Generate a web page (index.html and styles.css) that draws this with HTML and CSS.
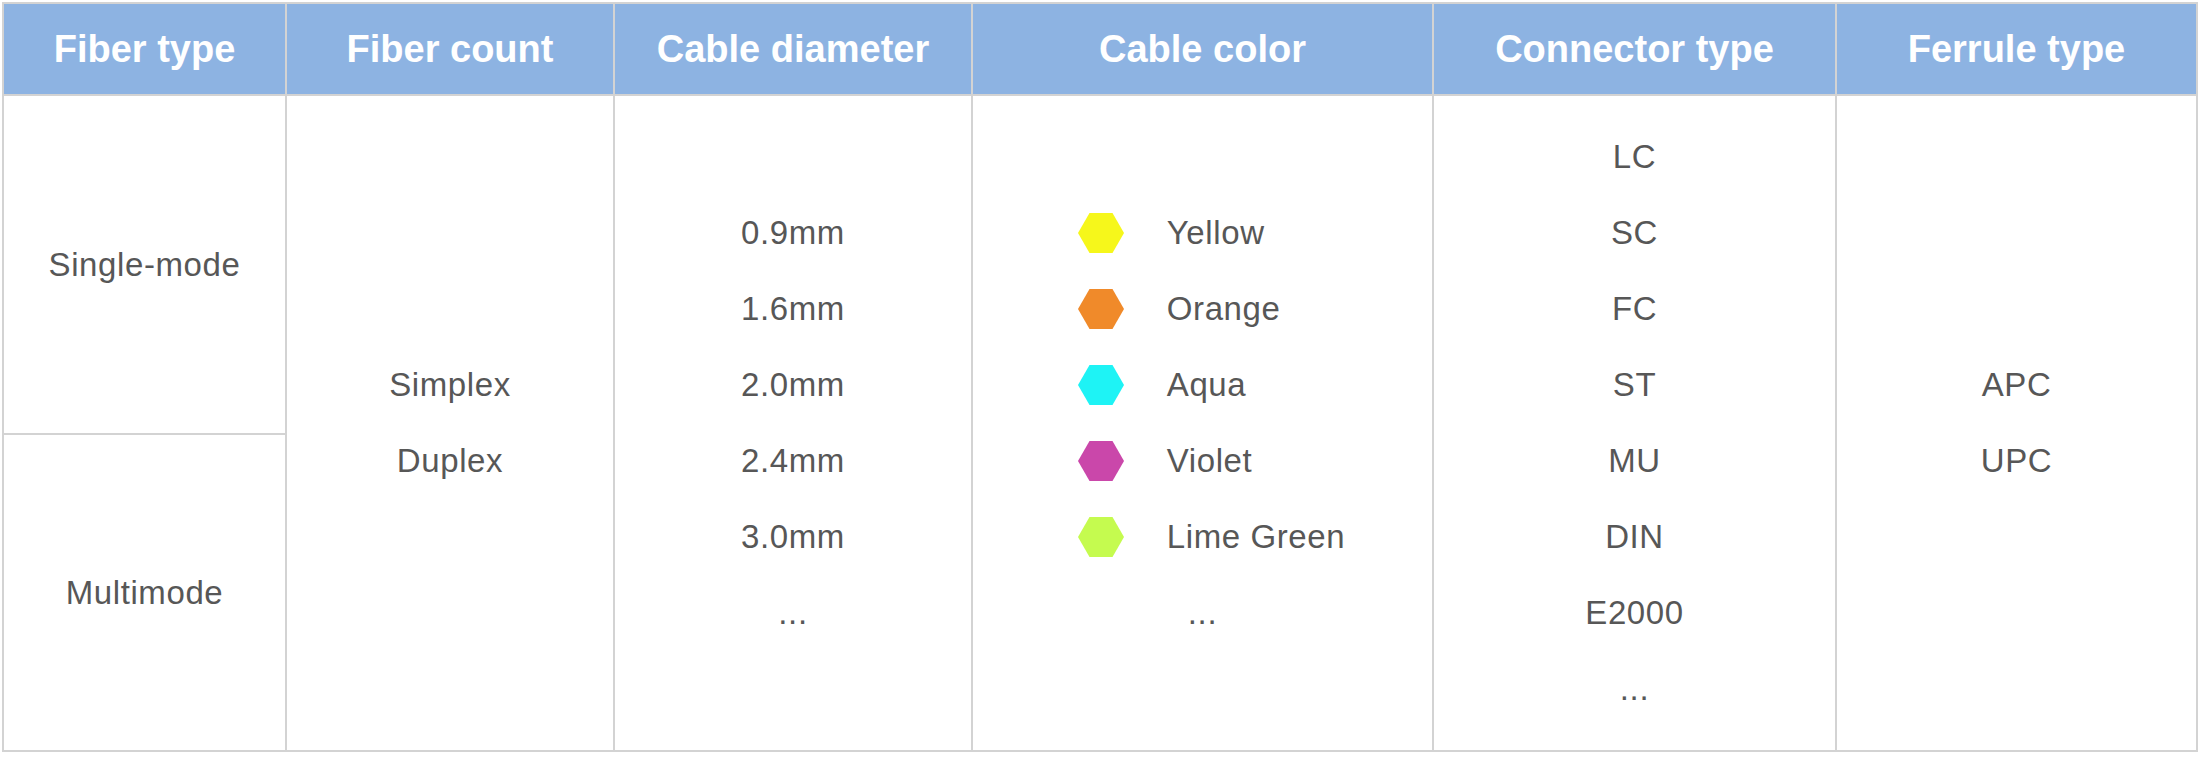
FILE: index.html
```html
<!DOCTYPE html>
<html lang="en">
<head>
<meta charset="utf-8">
<title>Fiber patch cable options</title>
<link rel="stylesheet" href="styles.css">
</head>
<body>
<div class="spec-grid">
  <div class="hd c1">Fiber type</div>
  <div class="hd c2">Fiber count</div>
  <div class="hd c3">Cable diameter</div>
  <div class="hd c4">Cable color</div>
  <div class="hd c5">Connector type</div>
  <div class="hd c6">Ferrule type</div>

  <div class="cell single"><div class="ln">Single-mode</div></div>
  <div class="cell multi"><div class="ln">Multimode</div></div>

  <div class="cell span c2">
    <div class="ln">Simplex</div>
    <div class="ln">Duplex</div>
  </div>

  <div class="cell span c3">
    <div class="ln">0.9mm</div>
    <div class="ln">1.6mm</div>
    <div class="ln">2.0mm</div>
    <div class="ln">2.4mm</div>
    <div class="ln">3.0mm</div>
    <div class="ln">...</div>
  </div>

  <div class="cell span c4">
    <div class="colors">
      <div class="ln color"><svg class="hex" viewBox="0 0 46 40"><polygon points="11.5,0 34.5,0 46,20 34.5,40 11.5,40 0,20" fill="#f6f71b"/></svg><span>Yellow</span></div>
      <div class="ln color"><svg class="hex" viewBox="0 0 46 40"><polygon points="11.5,0 34.5,0 46,20 34.5,40 11.5,40 0,20" fill="#f08a2a"/></svg><span>Orange</span></div>
      <div class="ln color"><svg class="hex" viewBox="0 0 46 40"><polygon points="11.5,0 34.5,0 46,20 34.5,40 11.5,40 0,20" fill="#1ef3f5"/></svg><span>Aqua</span></div>
      <div class="ln color"><svg class="hex" viewBox="0 0 46 40"><polygon points="11.5,0 34.5,0 46,20 34.5,40 11.5,40 0,20" fill="#ca47aa"/></svg><span>Violet</span></div>
      <div class="ln color"><svg class="hex" viewBox="0 0 46 40"><polygon points="11.5,0 34.5,0 46,20 34.5,40 11.5,40 0,20" fill="#c5fb4f"/></svg><span>Lime Green</span></div>
    </div>
    <div class="ln">...</div>
  </div>

  <div class="cell span c5">
    <div class="ln">LC</div>
    <div class="ln">SC</div>
    <div class="ln">FC</div>
    <div class="ln">ST</div>
    <div class="ln">MU</div>
    <div class="ln">DIN</div>
    <div class="ln">E2000</div>
    <div class="ln">...</div>
  </div>

  <div class="cell span c6">
    <div class="ln">APC</div>
    <div class="ln">UPC</div>
  </div>
</div>
</body>
</html>
```

FILE: styles.css
```css
html, body {
  margin: 0;
  padding: 0;
  background: #ffffff;
}

body {
  padding: 2px;
  font-family: "Liberation Sans", Arial, sans-serif;
}

.spec-grid {
  display: grid;
  width: 2196px;
  box-sizing: border-box;
  grid-template-columns: 281px 326px 356px 459px 401px 359px;
  grid-template-rows: 90px 337px 315px;
  gap: 2px;
  padding: 2px;
  background: #d3d3d3;
}

.hd {
  background: #8db3e2;
  color: #ffffff;
  font-weight: bold;
  font-size: 38px;
  display: flex;
  align-items: center;
  justify-content: center;
}

.cell {
  background: #ffffff;
  color: #575757;
  font-size: 33px;
  letter-spacing: 0.6px;
  display: flex;
  flex-direction: column;
  align-items: center;
  justify-content: center;
}

.single {
  grid-column: 1;
  grid-row: 2;
}

.multi {
  grid-column: 1;
  grid-row: 3;
}

.span {
  grid-row: 2 / 4;
}

.c2 { grid-column: 2; }
.c3 { grid-column: 3; }
.c4 { grid-column: 4; }
.c5 { grid-column: 5; }
.c6 { grid-column: 6; }

.hd.c1 { grid-column: 1; }
.hd { grid-row: 1; }

.ln {
  height: 76px;
  line-height: 76px;
  white-space: nowrap;
}

.colors {
  display: flex;
  flex-direction: column;
  align-items: flex-start;
  margin-left: 18px;
}

.color {
  display: flex;
  align-items: center;
  gap: 43px;
}

.hex {
  width: 46px;
  height: 40px;
  display: block;
  flex: none;
}
```
